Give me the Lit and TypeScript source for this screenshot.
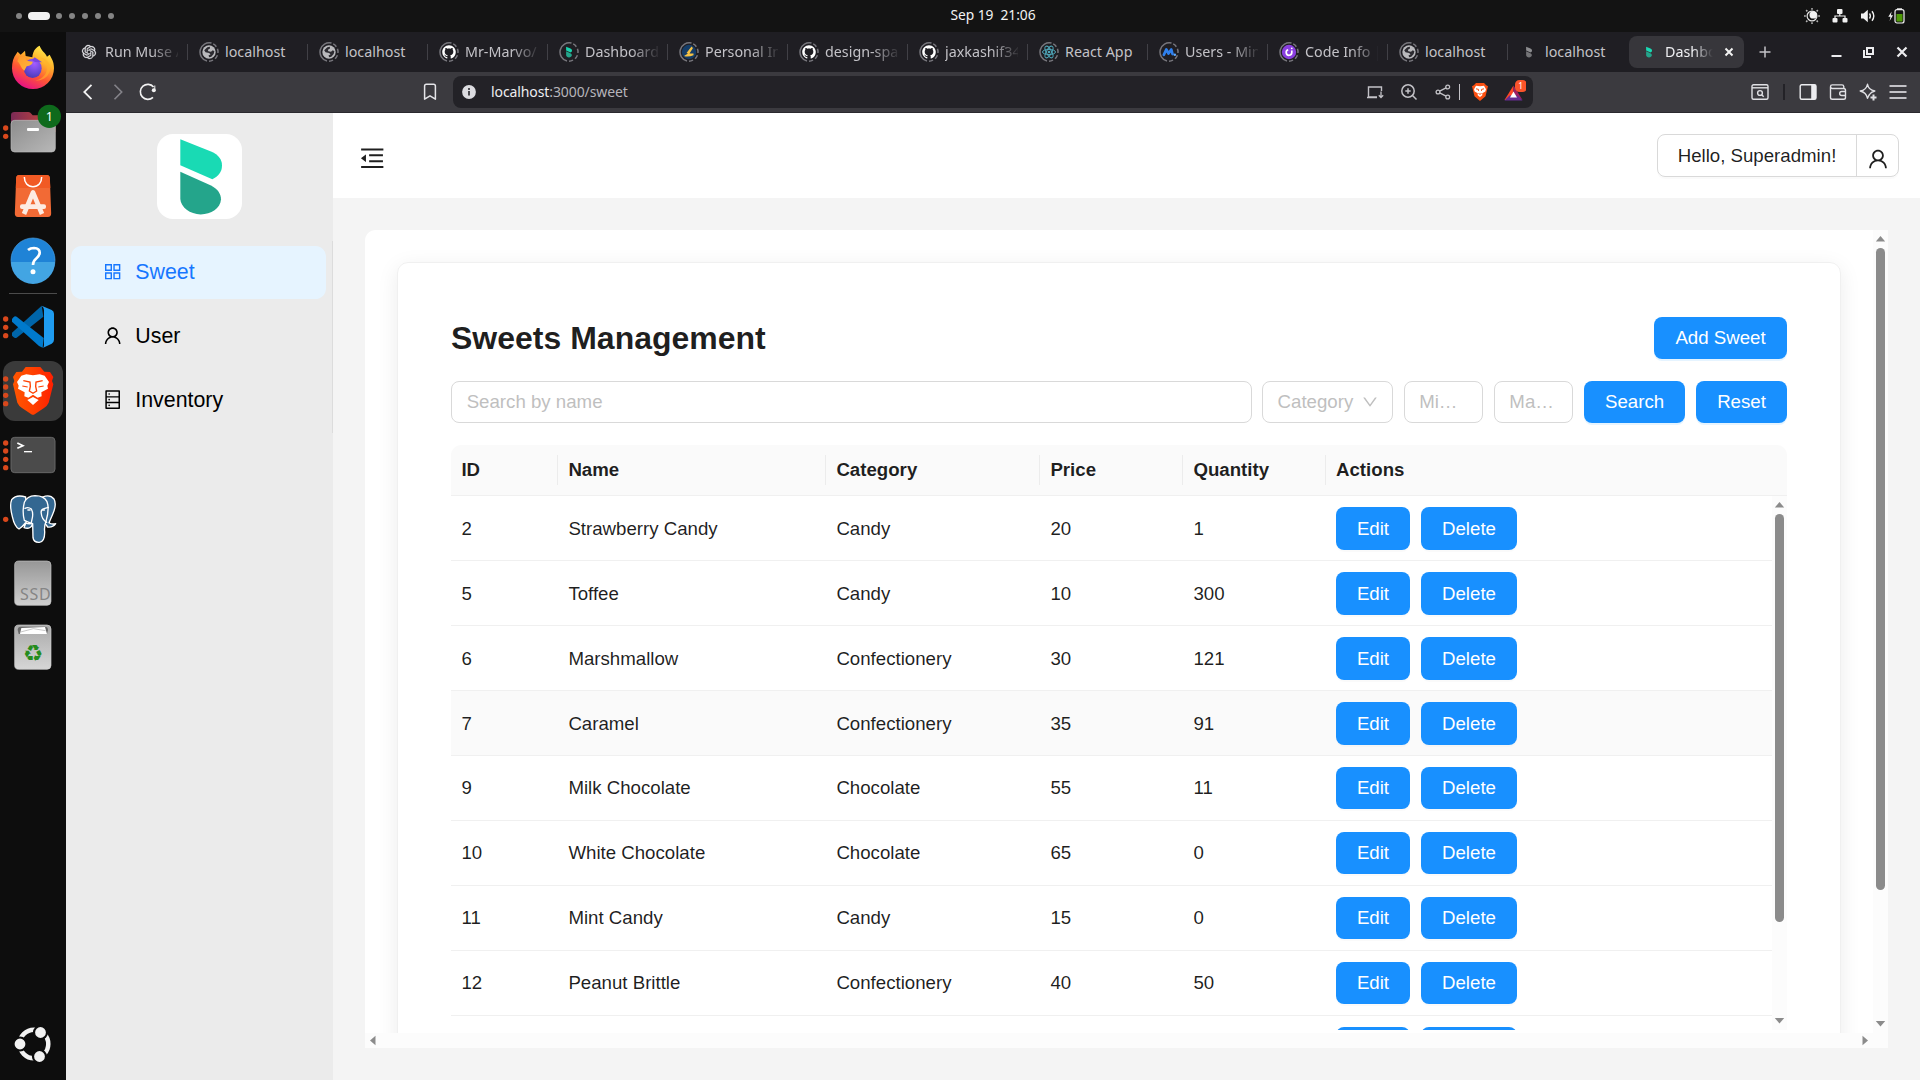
import { LitElement, html, css, svg } from "lit";
import { customElement, property } from "lit/decorators.js";
import { classMap } from "lit/directives/class-map.js";

const GITHUB = "M8 0C3.58 0 0 3.58 0 8c0 3.54 2.29 6.53 5.47 7.59.4.07.55-.17.55-.38 0-.19-.01-.82-.01-1.49-2.01.37-2.53-.49-2.69-.94-.09-.23-.48-.94-.82-1.13-.28-.15-.68-.52-.01-.53.63-.01 1.08.58 1.23.82.72 1.21 1.87.87 2.33.66.07-.52.28-.87.51-1.07-1.78-.2-3.64-.89-3.64-3.95 0-.87.31-1.59.82-2.15-.08-.2-.36-1.02.08-2.12 0 0 .67-.21 2.2.82.64-.18 1.32-.27 2-.27.68 0 1.36.09 2 .27 1.53-1.04 2.2-.82 2.2-.82.44 1.1.16 1.92.08 2.12.51.56.82 1.27.82 2.15 0 3.07-1.87 3.75-3.65 3.95.29.25.54.73.54 1.48 0 1.07-.01 1.93-.01 2.2 0 .21.15.46.55.38A8.013 8.013 0 0016 8c0-4.42-3.58-8-8-8z";
const KNOT = "M22.2819 9.8211a5.9847 5.9847 0 0 0-.5157-4.9108 6.0462 6.0462 0 0 0-6.5098-2.9A6.0651 6.0651 0 0 0 4.9807 4.1818a5.9847 5.9847 0 0 0-3.9977 2.9 6.0462 6.0462 0 0 0 .7427 7.0966 5.98 5.98 0 0 0 .511 4.9107 6.051 6.051 0 0 0 6.5146 2.9001A5.9847 5.9847 0 0 0 13.2599 24a6.0557 6.0557 0 0 0 5.7718-4.2058 5.9894 5.9894 0 0 0 3.9977-2.9001 6.0557 6.0557 0 0 0-.7475-7.0729zm-9.022 12.6081a4.4755 4.4755 0 0 1-2.8764-1.0408l.1419-.0804 4.7783-2.7582a.7948.7948 0 0 0 .3927-.6813v-6.7369l2.02 1.1686a.071.071 0 0 1 .038.052v5.5826a4.504 4.504 0 0 1-4.4945 4.4944zm-9.6607-4.1254a4.4708 4.4708 0 0 1-.5346-3.0137l.142.0852 4.783 2.7582a.7712.7712 0 0 0 .7806 0l5.8428-3.3685v2.3324a.0804.0804 0 0 1-.0332.0615L9.74 19.9502a4.4992 4.4992 0 0 1-6.1408-1.6464zM2.3408 7.8956a4.485 4.485 0 0 1 2.3655-1.9728V11.6a.7664.7664 0 0 0 .3879.6765l5.8144 3.3543-2.0201 1.1685a.0757.0757 0 0 1-.071 0l-4.8303-2.7865A4.504 4.504 0 0 1 2.3408 7.872zm16.5963 3.8558L13.1038 8.364 15.1192 7.2a.0757.0757 0 0 1 .071 0l4.8303 2.7913a4.4944 4.4944 0 0 1-.6765 8.1042v-5.6772a.79.79 0 0 0-.407-.667zm2.0107-3.0231l-.142-.0852-4.7735-2.7818a.7759.7759 0 0 0-.7854 0L9.409 9.2297V6.8974a.0662.0662 0 0 1 .0284-.0615l4.8303-2.7866a4.4992 4.4992 0 0 1 6.6802 4.66zM8.3065 12.863l-2.02-1.1638a.0804.0804 0 0 1-.038-.0567V6.0742a4.4992 4.4992 0 0 1 7.3757-3.4537l-.142.0805L8.704 5.459a.7948.7948 0 0 0-.3927.6813zm1.0976-2.3654l2.602-1.4998 2.6069 1.4998v2.9994l-2.5974 1.4997-2.6067-1.4997Z";
const USER = "M858.5 763.6a374 374 0 00-80.6-119.5 375.63 375.63 0 00-119.5-80.6c-.4-.2-.8-.3-1.2-.5C719.5 518 760 444.7 760 362c0-137-111-248-248-248S264 225 264 362c0 82.7 40.5 156 102.8 201.1-.4.2-.8.3-1.2.5-44.8 18.9-85 46-119.5 80.6a375.63 375.63 0 00-80.6 119.5A371.7 371.7 0 00136 901.8a8 8 0 008 8.2h60c4.4 0 7.9-3.5 8-7.8 2-77.2 33-149.5 87.8-204.3 56.7-56.7 132-87.9 212.2-87.9s155.5 31.2 212.2 87.9C779 752.7 810 825 812 902.2c.1 4.4 3.6 7.8 8 7.8h60a8 8 0 008-8.2c-1-47.8-10.9-94.3-29.5-138.2zM512 534c-45.9 0-89.1-17.9-121.6-50.4S340 407.9 340 362c0-45.9 17.9-89.1 50.4-121.6S466.1 190 512 190s89.1 17.9 121.6 50.4S684 316.1 684 362c0 45.9-17.9 89.1-50.4 121.6S557.9 534 512 534z";
const APPSTORE = "M464 144H160c-8.8 0-16 7.2-16 16v304c0 8.8 7.2 16 16 16h304c8.8 0 16-7.2 16-16V160c0-8.8-7.2-16-16-16zm-52 268H212V212h200v200zm452-268H560c-8.8 0-16 7.2-16 16v304c0 8.8 7.2 16 16 16h304c8.8 0 16-7.2 16-16V160c0-8.8-7.2-16-16-16zm-52 268H612V212h200v200zM464 544H160c-8.8 0-16 7.2-16 16v304c0 8.8 7.2 16 16 16h304c8.8 0 16-7.2 16-16V560c0-8.8-7.2-16-16-16zm-52 268H212V612h200v200zm452-268H560c-8.8 0-16 7.2-16 16v304c0 8.8 7.2 16 16 16h304c8.8 0 16-7.2 16-16V560c0-8.8-7.2-16-16-16zm-52 268H612V612h200v200z";
const DATABASE = "M832 64H192c-17.7 0-32 14.3-32 32v832c0 17.7 14.3 32 32 32h640c17.7 0 32-14.3 32-32V96c0-17.7-14.3-32-32-32zm-600 72h560v208H232V136zm560 480H232V408h560v208zm0 272H232V680h560v208zM304 240a40 40 0 1080 0 40 40 0 10-80 0zm0 272a40 40 0 1080 0 40 40 0 10-80 0zm0 272a40 40 0 1080 0 40 40 0 10-80 0z";
const MENU_FOLD = "M408 442h480c4.4 0 8-3.6 8-8v-56c0-4.4-3.6-8-8-8H408c-4.4 0-8 3.6-8 8v56c0 4.4 3.6 8 8 8zm-8 204c0 4.4 3.6 8 8 8h480c4.4 0 8-3.6 8-8v-56c0-4.4-3.6-8-8-8H408c-4.4 0-8 3.6-8 8v56zm504-486H120c-4.4 0-8 3.6-8 8v56c0 4.4 3.6 8 8 8h784c4.4 0 8-3.6 8-8v-56c0-4.4-3.6-8-8-8zm0 632H120c-4.4 0-8 3.6-8 8v56c0 4.4 3.6 8 8 8h784c4.4 0 8-3.6 8-8v-56c0-4.4-3.6-8-8-8zM115.4 518.9L271.7 642c5.8 4.6 14.4.5 14.4-6.9V388.9c0-7.4-8.5-11.5-14.4-6.9L115.4 505.1a8.74 8.74 0 000 13.8z";
const DOWN = "M884 256h-75c-5.1 0-9.9 2.5-12.9 6.6L512 654.2 227.9 262.6c-3-4.1-7.8-6.6-12.9-6.6h-75c-6.5 0-10.3 7.4-6.5 12.7l352.6 486.1c12.8 17.6 39 17.6 51.7 0l352.6-486.1c3.9-5.3.1-12.7-6.4-12.7z";
const LEAF_TOP = "M23.3 5.3L54 17.6C62 21 65 26 65 31.5C65 38 61.5 42 55.3 45.3L23.3 31.3Z";
const LEAF_BOTTOM = "M23.3 37.7L54 51.4C61 55 64 60 64 65.5C63.5 74 54 80.4 43.7 80.4C33 80.4 23.8 73 23.3 65Z";

const antIcon = (d: string, size: number) => html`<svg width=${size} height=${size} viewBox="0 0 1024 1024" fill="currentColor"><path d=${d}></path></svg>`;
const box = (w: number, h: number, body: unknown) => html`<svg width=${w} height=${h} viewBox="0 0 ${w} ${h}" fill="none">${body}</svg>`;

/* ---------- desktop top bar ---------- */
@customElement("system-bar")
class SystemBar extends LitElement {
  static styles = css`
    :host { display: grid; grid-template-columns: 1fr auto 1fr; align-items: center; height: 32px; background: #131313; color: #f2f2f2; font: 14px "Noto Sans", sans-serif; }
    svg { display: block; }
    .spaces { display: flex; align-items: center; padding-left: 16px; gap: 7px; }
    .dot { width: 6px; height: 6px; border-radius: 3px; background: #848484; }
    .dot.current { width: 22px; height: 8px; border-radius: 4px; background: #f2f2f2; margin: 0 -1px; }
    .clock { white-space: pre; font-size: 13.8px; letter-spacing: -0.05px; padding-left: 66px; line-height: 30px; margin-top: -2px; }
    .tray { display: flex; justify-content: flex-end; align-items: center; gap: 12px; padding-right: 15px; }
  `;
  render() {
    return html`
      <div class="spaces">${[0, 1, 2, 3, 4, 5, 6].map((i) => html`<div class=${classMap({ dot: true, current: i === 1 })}></div>`)}</div>
      <div class="clock">Sep 19  21:06</div>
      <div class="tray">
        ${box(16, 16, svg`<circle cx="8" cy="8" r="4.900" stroke="#e6e6e6" stroke-width="1.200"/><circle cx="9.200" cy="6.900" r="3.700" fill="#f2f2f2"/><path d="M8 0v1.800M8 14.200V16M0 8h1.800M14.200 8H16M2.100 2.100l1.300 1.300M12.600 12.600l1.300 1.300M2.100 13.900l1.300-1.300M12.600 3.400l1.300-1.300" stroke="#b4b4b4" stroke-width="1.500"/>`)}
        ${box(16, 16, svg`<rect x="5" y="1" width="5.5" height="5" rx="1" fill="#f2f2f2"/><rect x="0.5" y="10" width="5" height="4.5" rx="1" fill="#f2f2f2"/><rect x="10.5" y="10" width="5" height="4.5" rx="1" fill="#f2f2f2"/><path d="M7.8 5v3M3 11V8h10v3" stroke="#f2f2f2" stroke-width="1.2"/>`)}
        ${box(16, 16, svg`<path d="M1 5.5h2.5L7.8 1.7v12.6L3.500 10.500H1Z" fill="#f2f2f2"/><path d="M9.500 5.500q1.600 2.500 0 5M12 3.300q3.600 4.700 0 9.400" stroke="#f2f2f2" stroke-width="1.400"/>`)}
        ${box(17, 16, svg`<path d="M3.600 3.500L0.300 8.800h2.200L1.600 13L5 7.300H2.900Z" fill="#f2f2f2"/><rect x="7" y="1.700" width="9" height="13.300" rx="2" stroke="#f2f2f2" stroke-width="1.200"/><rect x="9" y="0.300" width="5" height="1.700" fill="#f2f2f2"/><rect x="8.500" y="6" width="6" height="7.500" fill="#4e9a06"/>`)}
      </div>`;
  }
}

/* ---------- dock ---------- */
/* Dock artwork is drawn on a 3x grid: each slot is 198 by 192 units. */
interface DockItem { top: number; dots: number[]; active?: boolean; art: unknown; }

const DOCK: DockItem[] = [
  { top: 105, dots: [], art: svg`
    <defs>
      <linearGradient id="ff1" x1="0.8" y1="0" x2="0.3" y2="1"><stop offset="0" stop-color="#fff44f"/><stop offset=".35" stop-color="#ffb02a"/><stop offset=".65" stop-color="#ff5634"/><stop offset="1" stop-color="#e60d8a"/></linearGradient>
      <radialGradient id="ff2" cx=".6" cy=".25" r=".8"><stop offset="0" stop-color="#a55cff"/><stop offset=".6" stop-color="#6a48d8"/><stop offset="1" stop-color="#4b39b0"/></radialGradient>
      <linearGradient id="ff3" x1="0" y1="0" x2="1" y2="1"><stop offset="0" stop-color="#ff9a2c"/><stop offset="1" stop-color="#ffb83a"/></linearGradient>
    </defs>
    <path d="M36 205C36 188 40 172 50 160L53 155L62 164L75 152L77 168L97 172C98 156 105 143 119 137C124 153 136 157 141 170L149 164L154 174C160 184 162 194 162 205A63 62 0 0 1 36 205Z" fill="url(#ff1)"/>
    <path d="M119 172C134 178 143 194 140 212C136 228 122 239 105 241C130 244 149 228 151 205C151 190 140 176 119 172Z" fill="#ffb02a" opacity=".6"/>
    <ellipse cx="98" cy="205" rx="27" ry="29" fill="url(#ff2)"/>
    <path d="M104 172L126 187L105 186L96 180Z" fill="#7a45e0"/>
    <path d="M52 184L58 170L75 171L80 182L98 185C99 192 90 197 80 199L73 212C62 205 62 192 52 184Z" fill="url(#ff3)"/>` },
  { top: 297, dots: [383, 408], art: svg`
    <defs><linearGradient id="fo" x1="0" x2="1"><stop offset="0" stop-color="#7b2a56"/><stop offset="1" stop-color="#d44b35"/></linearGradient><linearGradient id="fg" x1="0" y1="0" x2="1" y2="1"><stop offset="0" stop-color="#8d8d8d"/><stop offset="1" stop-color="#b8b8b8"/></linearGradient></defs>
    <path d="M33 346q0-10 10-10h42q6 0 9 5l4 5h58q10 0 10 10v40H33Z" fill="url(#fo)"/>
    <rect x="33" y="361" width="133" height="95" rx="11" fill="url(#fg)" stroke="#bdbdbd" stroke-width="2"/>
    <rect x="81" y="384" width="36" height="9" rx="3" fill="#fff"/>
    <circle cx="148" cy="349" r="35" fill="#0e6a1c"/>
    <text x="148" y="362" text-anchor="middle" font-size="38" font-family="Noto Sans, sans-serif" fill="#fff">1</text>` },
  { top: 489, dots: [], art: svg`
    <path d="M58 525h82q9 0 9.500 9l4 106q.500 11-10 11H54q-10 0-9.500-11l4-106q.500-9 9.500-9Z" fill="#f26a35"/>
    <path d="M58 525h82q9 0 9.500 9l1.500 30H47.500l1-30q.500-9 9.500-9Z" fill="#f15a24"/>
    <path d="M73 531c0 17 10 29 26 29s26-12 26-29" stroke="#fff" stroke-width="4.500" fill="none"/>
    <path d="M72 642L99 577L126 642" stroke="#fdebe2" stroke-width="14" fill="none" stroke-linejoin="round"/>
    <rect x="60" y="613" width="78" height="14" rx="6" fill="#fdebe2"/>` },
  { top: 681, dots: [], art: svg`
    <circle cx="99" cy="780" r="66" fill="#1f83d6"/>
    <path d="M33 786A66 66 0 0 0 165 786Z" fill="#42a5e3"/>
    <circle cx="99" cy="780" r="66" fill="none" stroke="#4aa0e4" stroke-width="2"/>
    <path d="M84 750Q91 744 102 744Q120 745 119 759Q118 768 108 776Q99 783 99 795" fill="none" stroke="#fff" stroke-width="8"/>
    <circle cx="99" cy="815" r="7.500" fill="#fff"/>` },
  { top: 885, dots: [956, 981, 1006], art: svg`
    <path d="M36 998L125 917L130 950L50 1013Q45 1016 41 1012L36 1007Z" fill="#0065a9"/>
    <path d="M36 957L41 951Q45 947 50 950L131 1014L128 1043L117 1038L36 965Z" fill="#007acc"/>
    <path d="M125 917L155 930Q162 933 162 941V1019Q162 1027 155 1031L128 1044Q132 1042 132 1035V930Q132 922 125 917Z" fill="#1f9cf0"/>` },
  { top: 1077, dots: [1136, 1160, 1185, 1210], active: true, art: svg`
    <defs><linearGradient id="br" x1="0" x2="1"><stop offset="0" stop-color="#ff5601"/><stop offset=".5" stop-color="#ff4000"/><stop offset="1" stop-color="#ff1f01"/></linearGradient></defs>
    <g transform="translate(0 1050)">
      <path d="M77 51H121L133 65L150 66L160 81L156 93L160 103L146 158Q142 167 132 174L104 193Q99 196 94 193L66 174Q56 167 52 158L39 103L43 93L39 81L49 66L66 65Z" fill="url(#br)"/>
      <path d="M99 76L119 73L134 77L147 96L142 107L144 116L124 127L125 139L113 143L99 134L85 143L73 139L74 127L54 116L56 107L51 96L64 77L79 73Z" fill="#fff"/>
      <path d="M70 92L90 96L91 109L88 123L99 130L110 123L107 109L108 96L128 92" stroke="#ff4000" stroke-width="4" fill="none"/>
      <path d="M67 108L83 111M131 108L115 111" stroke="#ff4000" stroke-width="3.500"/>
      <path d="M82 150L99 141L116 150L99 165Z" fill="#fff"/>
    </g>` },
  { top: 1269, dots: [1328, 1352, 1377, 1402], art: svg`
    <rect x="33" y="1312" width="132" height="106" rx="11" fill="#4b4b4b" stroke="#666" stroke-width="3"/>
    <path d="M52 1329L69 1337L52 1345" stroke="#fff" stroke-width="5" fill="none"/><path d="M72 1355H96" stroke="#fff" stroke-width="4"/>` },
  { top: 1461, dots: [1557], art: svg`
    <g transform="translate(0 1050)" stroke="#fff" stroke-width="4" stroke-linejoin="round" stroke-linecap="round">
      <path d="M128 441Q150 432 162 447Q171 463 158 493L147 518Q154 524 167 521Q159 533 143 531L135 520Z" fill="#336791"/>
      <path d="M77 441Q49 432 35 449Q28 465 37 500Q44 531 57 537Q66 532 76 519Q88 523 98 520Q93 540 72 533L79 515Z" fill="#336791"/>
      <path d="M73 457Q81 438 105 437Q132 437 141 455Q149 475 138 514Q132 530 134 544Q135 575 118 577Q101 578 99 563L98 521Q84 516 73 511Q66 485 73 457Z" fill="#336791"/>
      <path d="M75 475Q85 470 94 477Q101 490 96 508L94 517M132 476Q121 479 124 491Q125 507 140 517M132 476L145 472" fill="none"/>
      <path d="M84 480h6M128 480h5" stroke-width="5"/>
    </g>` },
  { top: 1653, dots: [], art: svg`
    <defs><linearGradient id="sd" x1="0" y1="0" x2="0" y2="1"><stop offset="0" stop-color="#979797"/><stop offset="1" stop-color="#cfcfcf"/></linearGradient></defs>
    <rect x="44" y="1683" width="109" height="133" rx="12" fill="url(#sd)" stroke="#c4c4c4" stroke-width="2"/>
    <text x="106" y="1799" text-anchor="middle" font-size="48" font-family="Noto Sans, sans-serif" fill="#858585" textLength="92">SSD</text>` },
  { top: 1845, dots: [], art: svg`
    <defs><linearGradient id="sd2" x1="0" y1="0" x2="0" y2="1"><stop offset="0" stop-color="#aaa"/><stop offset="1" stop-color="#d6d6d6"/></linearGradient></defs>
    <rect x="44" y="1875" width="109" height="133" rx="12" fill="url(#sd2)" stroke="#cfcfcf" stroke-width="2"/>
    <path d="M53 1890q0-10 10-10h71q10 0 10 10l-3 12H56Z" fill="#686868"/><path d="M60 1902L64 1884L135 1881L141 1902Z" fill="#fff"/><path d="M62 1896L100 1886L137 1892" stroke="#aaa" stroke-width="2" fill="none"/>
    <text x="99" y="1984" text-anchor="middle" font-size="68" font-family="DejaVu Sans, sans-serif" fill="#258c1d">♻</text>` },
];

@customElement("app-dock")
class AppDock extends LitElement {
  static styles = css`
    :host { display: flex; flex-direction: column; width: 66px; height: 1048px; background: #0d0d0d; padding-top: 3px; box-sizing: border-box; }
    svg { display: block; flex: none; }
    .rule { height: 1px; margin: 2px 9px 1px; background: #4b4b4b; flex: none; }
    .launcher { margin: auto 0 0; padding-bottom: 4px; }
  `;
  render() {
    return html`
      ${DOCK.map((item, i) => html`
        ${i === 4 ? html`<div class="rule"></div>` : ""}
        <svg width="66" height="64" viewBox="0 ${item.top} 198 192">
          ${item.active ? svg`<rect x="9" y=${item.top + 6} width="180" height="180" rx="36" fill="#3a3a3a"/>` : ""}
          ${item.dots.map((y) => svg`<circle cx="17" cy=${y + 1} r="8" fill="#d9481c"/>`)}
          ${item.art}
        </svg>`)}
      <svg class="launcher" width="66" height="64" viewBox="0 0 66 64">
        <circle cx="34" cy="32" r="14.300" fill="none" stroke="#f2f2f2" stroke-width="4.500"/>
        <g fill="#f2f2f2" stroke="#0d0d0d" stroke-width="2.200"><circle cx="20" cy="32" r="6.500"/><circle cx="40.500" cy="20.500" r="6.500"/><circle cx="39.500" cy="44.500" r="6.500"/></g>
      </svg>`;
  }
}

/* ---------- browser chrome ---------- */
const ring = (body: unknown) => svg`<path d="M12.500 1.100A9.200 9.200 0 1 0 8 19" stroke="#77767c" stroke-width="1.500" fill="none"/><path d="M10 19.200A9.200 9.200 0 0 0 12.500 1.200" stroke="#77767c" stroke-width="1.500" fill="none" stroke-dasharray="4.200 2.400"/>${body}`;
const leaf = (a: string, b: string) => svg`<g transform="translate(3.800 4) scale(.142)"><path d=${LEAF_TOP} fill=${a}/><path d=${LEAF_BOTTOM} fill=${b}/></g>`;
const FAVICONS: Record<string, unknown> = {
  knot: svg`<g transform="translate(3 3) scale(.583)"><path d=${KNOT} fill="#e4e4e8" stroke="#e4e4e8" stroke-width=".5"/></g>`,
  globe: ring(svg`<circle cx="10" cy="10" r="6.700" fill="#b9b9bc"/><path d="M5.200 8.200L8.300 5.300L11 4.800L10.800 6.800L8.800 7.800L9.300 9.200L12 9.800L13.800 8.200L15.400 9.300Q15.300 12.800 12.300 14.800L10.200 15.300L9.500 13.500L11.500 12.400L10.200 11L6.500 10.300Z" fill="#2c2b31"/>`),
  github: ring(svg`<g transform="translate(3.200 3.200) scale(.85)"><path d=${GITHUB} fill="#fff"/></g>`),
  leafRing: ring(leaf("#19d3ae", "#24a58b")),
  leaf: leaf("#19dab4", "#24a58b"),
  leafGrey: leaf("#8d8d90", "#747477"),
  personal: ring(svg`<circle cx="10" cy="10" r="7.200" fill="#143d68"/><path d="M12.500 4.500L14 6L10.500 11.500H14.500V13.200Q9 15.500 5 14L9 11.500L7.500 11Z" fill="#f6c244"/>`),
  react: ring(svg`<g stroke="#4fa6b8" stroke-width="1" fill="none"><ellipse cx="10" cy="10" rx="6.500" ry="2.600"/><ellipse cx="10" cy="10" rx="6.500" ry="2.600" transform="rotate(60 10 10)"/><ellipse cx="10" cy="10" rx="6.500" ry="2.600" transform="rotate(120 10 10)"/></g><circle cx="10" cy="10" r="1.300" fill="#4fa6b8"/>`),
  users: ring(svg`<path d="M4.800 12.800L7.300 7.500L9.500 11.500L12.300 7.500L13.500 12" stroke="#2f80ed" stroke-width="2.700" stroke-linejoin="round" stroke-linecap="round" fill="none"/><circle cx="15.800" cy="12.800" r="1.300" fill="#5aa7ff"/>`),
  code: ring(svg`<circle cx="10" cy="10" r="7.200" fill="#8a3fe0"/><path d="M9.200 7.800A2.800 2.800 0 1 0 12.800 10.500V8.500" stroke="#fff" stroke-width="1.700" fill="none"/><circle cx="12.800" cy="6.300" r=".9" fill="#fff"/>`),
};
const TABS: [string, string][] = [
  ["knot", "Run Muse A"], ["globe", "localhost"], ["globe", "localhost"], ["github", "Mr-Marvo/"], ["leafRing", "Dashboard"],
  ["personal", "Personal In"], ["github", "design-spa"], ["github", "jaxkashif34"], ["react", "React App"], ["users", "Users - Min"],
  ["code", "Code Info |"], ["globe", "localhost"], ["leafGrey", "localhost"], ["leaf", "Dashbo"],
];

@customElement("browser-chrome")
class BrowserChrome extends LitElement {
  static styles = css`
    :host { display: block; height: 81px; font: 14px "Noto Sans", sans-serif; color: #c3c2c7; background: #1f1e23; }
    svg { display: block; flex: none; }
    .tabs { display: flex; align-items: center; height: 40px; padding-left: 2px; }
    .tab { display: flex; align-items: center; box-sizing: border-box; width: 120px; height: 32px; padding-left: 11px; gap: 6px; flex: none; }
    .title { flex: 1; overflow: hidden; white-space: nowrap; font-size: 14.300px; line-height: 24px; mask-image: linear-gradient(90deg, #000 46px, transparent 76px); }
    .title.full { mask-image: none; }
    .sep { width: 1px; height: 16px; background: #414046; margin-left: 3px; }
    .sep.none { background: transparent; }
    .tab.active { width: 115px; margin-left: 1px; padding-left: 10px; background: #37363b; border-radius: 8px; color: #efeff2; }
    .tab.active .title { flex: none; width: 48px; mask-image: linear-gradient(90deg, #000 28px, transparent 48px); }
    .plus { margin-left: 15px; }
    .window { display: flex; gap: 17px; margin-left: auto; padding-right: 10px; }
    .bar { display: flex; align-items: center; height: 40px; background: #3b3a3f; border-bottom: 1px solid #2a292e; }
    .nav { display: flex; gap: 10px; padding-left: 12px; width: 362px; }
    .bookmark { margin-left: auto; }
    .url { display: flex; align-items: center; box-sizing: border-box; width: 1080px; height: 32px; margin-left: 13px; padding: 0 7px 0 9px; border-radius: 8px; background: #232227; }
    .address { margin-left: 15px; font-size: 14px; color: #b5b4ba; margin-top: -1px; letter-spacing: -0.100px; }
    .host { color: #ededf0; }
    .actions { display: flex; align-items: center; margin-left: auto; gap: 14px; }
    .pipe { width: 1px; height: 16px; background: #c3c2c7; margin: 0 -4px 0 -8px; }
    .tools { display: flex; align-items: center; margin-left: auto; padding-right: 12px; gap: 10px; }
    .tools .pipe { width: 2px; background: #232227; margin: 0 3px; }
  `;
  render() {
    return html`
      <div class="tabs">
        ${TABS.map(([icon, title], i) => html`
          <div class=${classMap({ tab: true, active: i === 13 })}>
            ${box(20, 20, FAVICONS[icon])}
            <span class=${classMap({ title: true, full: title === "localhost" || title === "React App" })}>${title}</span>
            ${i === 13 ? html`<svg width="20" height="20" viewBox="0 0 20 20"><path d="M6.500 6.500l7 7M13.500 6.500l-7 7" stroke="#f2f2f2" stroke-width="2"/></svg>` : html`<span class=${classMap({ sep: true, none: i === 12 })}></span>`}
          </div>`)}
        <svg class="plus" width="12" height="12" viewBox="0 0 12 12"><path d="M6 .5v11M.5 6h11" stroke="#c3c2c7" stroke-width="1.500"/></svg>
        <div class="window">
          ${box(16, 16, svg`<path d="M3.500 12h10" stroke="#ececef" stroke-width="2"/>`)}
          ${box(16, 16, svg`<rect x="6" y="4" width="6" height="6" stroke="#ececef" stroke-width="2"/><path d="M3 6v7h7" stroke="#ececef" stroke-width="2"/>`)}
          ${box(16, 16, svg`<path d="M3.500 3.500l9 9M12.500 3.500l-9 9" stroke="#ececef" stroke-width="2.200"/>`)}
        </div>
      </div>
      <div class="bar">
        <div class="nav">
          ${box(20, 20, svg`<path d="M13.500 2.800L6.300 10l7.200 7.200" stroke="#f2f2f2" stroke-width="1.800"/>`)}
          ${box(20, 20, svg`<path d="M6.500 2.800L13.700 10l-7.200 7.200" stroke="#85848a" stroke-width="1.600"/>`)}
          ${box(20, 20, svg`<path d="M15.600 5A7.500 7.500 0 1 0 15 15.300" stroke="#f2f2f2" stroke-width="1.600"/><circle cx="15.800" cy="8.300" r="2" fill="#f2f2f2"/><path d="M16.800 3.500v5" stroke="#f2f2f2" stroke-width="1"/>`)}
          <svg class="bookmark" width="20" height="20" viewBox="0 0 20 20" fill="none"><path d="M4.600 17.200V4Q4.600 2.200 6.400 2.200h7.200q1.800 0 1.800 1.800v13.200L10 13.800Z" stroke="#e4e4e8" stroke-width="1.500" stroke-linejoin="round"/></svg>
        </div>
        <div class="url">
          ${box(14, 14, svg`<circle cx="7" cy="7" r="6.900" fill="#dcdce0"/><circle cx="7" cy="4" r="1" fill="#232227"/><path d="M7 6v4.500" stroke="#232227" stroke-width="1.600"/>`)}
          <span class="address"><span class="host">localhost</span>:3000/sweet</span>
          <div class="actions">
            ${box(20, 20, svg`<path d="M16.500 9V5H3.500v10H12M2 15.500h10" stroke="#c3c2c7" stroke-width="1.400"/><path d="M16 9.500v6M13.800 13.300l2.200 2.200L18.200 13.300" stroke="#c3c2c7" stroke-width="1.300"/>`)}
            ${box(20, 20, svg`<circle cx="9" cy="9" r="6.200" stroke="#c3c2c7" stroke-width="1.500"/><path d="M13.500 13.500L17.500 17.500M9 6.300v5.400M6.300 9h5.400" stroke="#c3c2c7" stroke-width="1.500"/>`)}
            ${box(20, 20, svg`<g stroke="#c3c2c7" stroke-width="1.300"><circle cx="5" cy="10" r="1.900"/><circle cx="14.700" cy="5" r="1.900"/><circle cx="14.700" cy="15" r="1.900"/><path d="M6.700 9.100l6.300-3.200M6.700 10.900l6.300 3.200"/></g>`)}
            <span class="pipe"></span>
            ${box(20, 20, svg`<path d="M6 1h8l2.200 2.200 1.800 1-.7 2.800-1.800 7.200L10 19 4.500 14.200 2.700 7 2 4.200l1.800-1Z" fill="#fb5012"/><path d="M10 4.300l4-.6 2 3.500-.7 2.300-3 1.700v2L10 15l-2.300-1.800v-2l-3-1.700L4 7.200l2-3.500Z" fill="#fff"/><path d="M6 6.800l2.500.6v1.500M14 6.800l-2.500.6v1.500M8.500 11.500L10 12.300l1.500-.8" stroke="#fb5012" stroke-width="1" fill="none"/>`)}
            <svg width="22" height="26" viewBox="0 0 22 26" fill="none"><path d="M9.500 6.500L.500 21h9l0-7Z" fill="#ff4724"/><path d="M9.500 6.500L18.500 21l-9-5Z" fill="#9e1f63"/><path d="M.500 21.500h18l-5-5h-8Z" fill="#662d91"/><path d="M9.500 12.500l3.500 6H6Z" fill="#fff"/><rect x="11" y="1" width="12" height="12" rx="4.500" fill="#fb542b"/><text x="16.800" y="10.300" font-size="8.500" font-family="Noto Sans" text-anchor="middle" fill="#fff">1</text></svg>
          </div>
        </div>
        <div class="tools">
          ${box(20, 20, svg`<rect x="2" y="2.800" width="16" height="14.400" rx="1.500" stroke="#e0e0e4" stroke-width="1.400"/><path d="M2 5.800h16" stroke="#e0e0e4" stroke-width="1.400"/><circle cx="10" cy="11" r="2.400" stroke="#e0e0e4" stroke-width="1.400"/><path d="M11.700 12.700l2 2" stroke="#e0e0e4" stroke-width="1.400"/>`)}
          <span class="pipe"></span>
          ${box(20, 20, svg`<rect x="2.200" y="2.800" width="15.800" height="14.400" rx="1.500" stroke="#ececef" stroke-width="1.400"/><path d="M13.200 3h4.800v14h-4.800Z" fill="#ececef"/>`)}
          ${box(20, 20, svg`<path d="M2.500 5v10.500q0 1.800 1.800 1.800h11.400q1.800 0 1.800-1.800V8.300q0-1.800-1.800-1.800H4Q2.500 6.300 2.500 4.600 2.500 2.900 4.300 2.900H14q1.600 0 1.800 1.800v1.600M17.500 9.500h-3.800q-2 0-2 2t2 2h3.800" stroke="#e0e0e4" stroke-width="1.400"/>`)}
          ${box(20, 20, svg`<path d="M9.500 2.300Q10.500 7.800 16.800 9 13 10 11.500 12.500 10.500 13.800 9.500 16.300 8.300 10.400 2.200 9 8.200 8 9.500 2.300Z" stroke="#e0e0e4" stroke-width="1.400" stroke-linejoin="round"/><path d="M15.500 12.500v6M12.500 15.500h6" stroke="#e0e0e4" stroke-width="2"/>`)}
          ${box(20, 20, svg`<path d="M1.500 4h17M1.500 10h17M1.500 16h17" stroke="#c3c2c7" stroke-width="1.800"/>`)}
        </div>
      </div>`;
  }
}

/* ---------- scrollbar ---------- */
@customElement("scroll-track")
class ScrollTrack extends LitElement {
  @property({ type: Number }) thumb = 0;
  static styles = css`
    :host { display: flex; flex-direction: column; align-items: center; width: 15px; flex: none; background: #fcfcfc; }
    svg { display: block; flex: none; }
    .thumb { width: 9px; border-radius: 5px; background: #8b8b8b; }
    .end { margin-top: auto; }
  `;
  render() {
    return html`
      <svg width="15" height="18" viewBox="0 0 15 18"><path d="M2.800 11.500L7.500 6L12.200 11.500Z" fill="#8b8b8b"/></svg>
      <div class="thumb" style="height:${this.thumb}px"></div>
      <svg class="end" width="15" height="18" viewBox="0 0 15 18"><path d="M2.800 6L7.500 11.500L12.200 6Z" fill="#8b8b8b"/></svg>`;
  }
}

/* ---------- sweets page ---------- */
const ROWS: [number, string, string, number, number][] = [
  [2, "Strawberry Candy", "Candy", 20, 1], [5, "Toffee", "Candy", 10, 300], [6, "Marshmallow", "Confectionery", 30, 121],
  [7, "Caramel", "Confectionery", 35, 91], [9, "Milk Chocolate", "Chocolate", 55, 11], [10, "White Chocolate", "Chocolate", 65, 0],
  [11, "Mint Candy", "Candy", 15, 0], [12, "Peanut Brittle", "Confectionery", 40, 50],
];

@customElement("sweets-page")
class SweetsPage extends LitElement {
  static styles = css`
    :host { display: grid; grid-template-columns: 267px 1fr; height: 967px; background: #f4f4f4; font: 18.667px/29.333px "Liberation Sans", Arial, sans-serif; color: rgba(0, 0, 0, 0.88); }
    svg { display: block; flex: none; }
    .sidebar { background: #ebebeb; padding-top: 21px; }
    .logo { display: block; width: 85px; height: 85px; margin: 0 auto; border-radius: 16px; background: #fff; }
    .menu { display: flex; flex-direction: column; gap: 11px; box-sizing: border-box; height: 192px; margin-top: 22px; padding: 5px 6px 0 5px; border-right: 1px solid #dcdcdc; }
    .item { display: flex; align-items: center; gap: 12px; height: 53px; padding-left: 31px; border-radius: 10.667px; font-size: 21.333px; color: #000; }
    .item svg { margin-top: -1px; }
    .item.selected { background: #e6f4ff; color: #1677ff; }
    .main { display: flex; flex-direction: column; min-width: 0; }
    .header { display: flex; align-items: center; justify-content: space-between; height: 85px; flex: none; padding: 0 21px 0 24.500px; background: #fff; }
    .fold { padding-top: 6px; }
    .account { display: flex; align-items: stretch; box-sizing: border-box; height: 43px; border: 1px solid #d9d9d9; border-radius: 8px; box-shadow: 0 2px 0 rgba(0, 0, 0, 0.02); }
    .hello { width: 198px; text-align: center; padding-top: 5px; line-height: 31px; }
    .who { display: flex; align-items: center; justify-content: center; width: 41px; padding-top: 7px; border-left: 1px solid #d9d9d9; }
    .panel { display: grid; grid-template-columns: 1fr 15px; grid-template-rows: 803px 15px; height: 818px; margin: 32px 32px 0; border-radius: 10.667px 0 0 0; overflow: hidden; background: #fff; }
    .viewport { overflow: hidden; padding: 32px 32px 0; }
    .card { box-sizing: border-box; height: 900px; border: 1px solid #f0f0f0; border-radius: 11px; padding: 54px 53px 0; box-shadow: 0 5px 21px rgba(0, 0, 0, 0.08); }
    .hbar { grid-column: 1 / 3; display: flex; align-items: center; justify-content: space-between; background: #fcfcfc; padding: 0 18.500px 0 3px; }
    .heading { display: flex; justify-content: space-between; align-items: flex-start; height: 64px; }
    h2 { margin: 0; font-size: 32px; line-height: 42px; font-weight: 700; }
    .btn { box-sizing: border-box; height: 42px; border-radius: 8px; background: #1890ff; color: #fff; text-align: center; line-height: 41px; box-shadow: 0 2px 0 rgba(5, 145, 255, 0.1); flex: none; }
    .add { width: 133px; }
    .filters { display: flex; gap: 10.667px; height: 64px; align-items: flex-start; }
    .field { box-sizing: border-box; height: 42px; border: 1px solid #d9d9d9; border-radius: 8px; padding: 0 14.667px; line-height: 39px; color: #bfbfbf; flex: none; }
    .name { flex: 1; margin-right: -1px; }
    .category { display: flex; align-items: center; justify-content: space-between; width: 131px; padding-right: 12.500px; }
    .category span { line-height: 38px; padding-bottom: 1px; }
    .number { width: 79.500px; }
    .search { width: 101.500px; }
    .reset { width: 91px; }
    .row { display: grid; grid-template-columns: 107px 268px 214px 143px 142.600px 1fr; box-sizing: border-box; align-items: center; border-bottom: 1px solid #f0f0f0; }
    .row > span { padding-left: 10.400px; }
    .head { height: 51px; background: #fafafa; border-radius: 10.667px 10.667px 0 0; font-weight: 700; }
    .head > span { height: 30px; line-height: 29px; box-sizing: border-box; border-right: 1px solid #ececec; }
    .head > span:last-child { border: 0; }
    .body { display: flex; height: 534px; overflow: hidden; }
    .rows { flex: 1; }
    .rows .row { height: 65px; }
    .rows .row.hovered { background: #fafafa; }
    .rows .ops { display: flex; gap: 11px; align-self: start; padding-top: 11px; }
    .rows .btn { box-shadow: 0 2px 0 rgba(0, 0, 0, 0.02); }
    .edit { width: 74px; }
    .delete { width: 96px; }
    .cell { padding-bottom: 1px; }
    .row.low .cell { padding: 1px 0 0 10.400px; }
    .row.low .btn { height: 43px; line-height: 43px; }
  `;
  private ops() {
    return html`<span class="ops"><div class="btn edit">Edit</div><div class="btn delete">Delete</div></span>`;
  }
  render() {
    return html`
      <div class="sidebar">
        <svg class="logo" viewBox="0 0 85 85"><path d=${LEAF_TOP} fill="#19dab4"></path><path d=${LEAF_BOTTOM} fill="#24a58b"></path></svg>
        <div class="menu">
          <div class="item selected">${antIcon(APPSTORE, 21.333)}<span>Sweet</span></div>
          <div class="item">${antIcon(USER, 21.333)}<span>User</span></div>
          <div class="item">${antIcon(DATABASE, 21.333)}<span>Inventory</span></div>
        </div>
      </div>
      <div class="main">
        <div class="header">
          <div class="fold">${antIcon(MENU_FOLD, 28.500)}</div>
          <div class="account"><div class="hello">Hello, Superadmin!</div><div class="who">${antIcon(USER, 24)}</div></div>
        </div>
        <div class="panel">
          <div class="viewport">
            <div class="card">
              <div class="heading"><h2>Sweets Management</h2><div class="btn add">Add Sweet</div></div>
              <div class="filters">
                <div class="field name">Search by name</div>
                <div class="field category"><span>Category</span>${antIcon(DOWN, 18)}</div>
                <div class="field number">Mi…</div>
                <div class="field number">Ma…</div>
                <div class="btn search">Search</div>
                <div class="btn reset">Reset</div>
              </div>
              <div class="row head"><span>ID</span><span>Name</span><span>Category</span><span>Price</span><span>Quantity</span><span>Actions</span></div>
              <div class="body">
                <div class="rows">
                  ${ROWS.map((r, i) => html`<div class=${classMap({ row: true, low: i < 4, hovered: r[0] === 7 })}>${r.map((v) => html`<span class="cell">${v}</span>`)}${this.ops()}</div>`)}
                  <div class="row"><span></span><span></span><span></span><span></span><span></span>${this.ops()}</div>
                </div>
                <scroll-track .thumb=${408}></scroll-track>
              </div>
            </div>
          </div>
          <scroll-track .thumb=${642}></scroll-track>
          <div class="hbar">
            <svg width="10" height="11" viewBox="0 0 10 11"><path d="M7.500 .8L2 5.500L7.500 10.200Z" fill="#8b8b8b"></path></svg>
            <svg width="10" height="11" viewBox="0 0 10 11"><path d="M2.500 .8L8 5.500L2.500 10.200Z" fill="#8b8b8b"></path></svg>
          </div>
        </div>
      </div>`;
  }
}

@customElement("app-root")
class AppRoot extends LitElement {
  static styles = css`
    :host { display: block; width: 1920px; height: 1080px; overflow: hidden; }
    .desktop { display: flex; }
    .window { width: 1854px; }
  `;
  render() {
    return html`<system-bar></system-bar>
      <div class="desktop"><app-dock></app-dock><div class="window"><browser-chrome></browser-chrome><sweets-page></sweets-page></div></div>`;
  }
}
